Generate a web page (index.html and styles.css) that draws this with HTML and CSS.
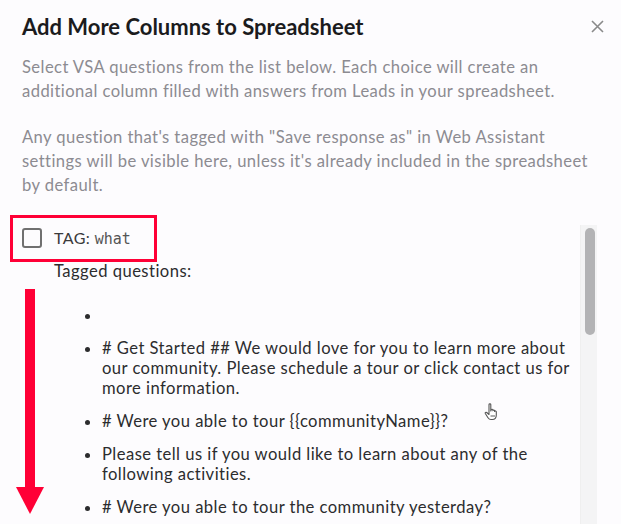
FILE: index.html
```html
<!DOCTYPE html>
<html lang="en">
<head>
    <meta charset="UTF-8">
    <meta name="viewport" content="width=device-width, initial-scale=1.0">
    <title>Add More Columns to Spreadsheet</title>
    <link rel="stylesheet" href="styles.css">
</head>
<body>
<div class="dialog">

    <div class="header">
        <h2 class="title">Add More Columns to Spreadsheet</h2>
        <span class="close">
            <svg width="13" height="13" viewBox="0 0 13 13"><path d="M1 1L12 12M12 1L1 12" stroke="#8a8a8a" stroke-width="1.6" fill="none"/></svg>
        </span>
    </div>

    <div class="intro">
        <p>Select VSA questions from the list below. Each choice will create an additional column filled with answers from Leads in your spreadsheet.</p>
        <p>Any question that's tagged with "Save response as" in Web Assistant settings will be visible here, unless it's already included in the spreadsheet by default.</p>
    </div>

    <div class="scroll-area">
        <div class="scroll-content">
            <label class="tag-row">
                <span class="checkbox"></span>
                <span>TAG: <code>what</code></span>
            </label>
            <div class="tagged">
                <div class="tagged-label">Tagged questions:</div>
                <ul class="questions">
                    <li>&nbsp;</li>
                    <li># Get Started ## We would love for you to learn more about our community. Please schedule a tour or click contact us for more information.</li>
                    <li># Were you able to tour {{communityName}}?</li>
                    <li>Please tell us if you would like to learn about any of the following activities.</li>
                    <li># Were you able to tour the community yesterday?</li>
                </ul>
            </div>
        </div>
        <div class="scroll-track">
            <div class="scroll-thumb"></div>
        </div>
    </div>

    <!-- annotations on top of the screenshot -->
    <div class="highlight-box"></div>
    <div class="arrow">
        <div class="arrow-line"></div>
        <div class="arrow-head"></div>
    </div>
    <svg class="cursor" width="18" height="20" viewBox="0 0 18 20">
        <path d="M5 2.5c0-1 1.8-1 1.8 0V9l.4-1.2c.4-.9 1.7-.6 1.7.3v.6c.3-.9 1.7-.8 1.7.2v.5c.4-.8 1.7-.6 1.7.4V13c0 2.5-1.6 4.5-4 4.5H7c-1.4 0-2.3-.7-3-1.8L1.3 11.5c-.5-.9.6-1.7 1.4-1L5 12.5z" fill="#fff" stroke="#555" stroke-width="1.1" stroke-linejoin="round"/>
        <path d="M6.5 14h4.5" stroke="#999" stroke-width="1.6"/>
    </svg>

</div>
</body>
</html>
```

FILE: styles.css
```css
body {
    margin: 0;
    background: #fdfcfe;
    font-family: Lato, "Open Sans", sans-serif;
    overflow: hidden;
}

.dialog {
    position: relative;
    height: 524px;
    padding: 12px 0 0 22px;
    box-sizing: border-box;
}

.header {
    display: flex;
    justify-content: space-between;
    align-items: center;
    padding-right: 17px;
}

.title {
    margin: 0;
    font-size: 22px;
    font-weight: 700;
    color: #1b1b1d;
    line-height: 30px;
}

.close {
    display: flex;
    margin-top: -2px;
}

.intro {
    padding-right: 24px;
}

.intro p {
    margin: 13px 0 22px;
    font-size: 16.6px;
    letter-spacing: 0.42px;
    line-height: 24px;
    color: #8c8b91;
}

.intro p + p {
    margin-top: 0;
    margin-bottom: 28px;
}

.scroll-area {
    display: flex;
    padding-right: 24px;
}

.scroll-content {
    flex: 1;
}

.tag-row {
    display: flex;
    align-items: center;
    gap: 12px;
    height: 24px;
    padding-top: 1px;
    font-size: 16px;
    letter-spacing: 0.4px;
    color: #3a3a3c;
}

.tag-row code {
    font-family: "DejaVu Sans Mono", monospace;
    font-size: 15px;
    letter-spacing: 0;
    color: #555;
}

.checkbox {
    width: 16px;
    height: 16px;
    border: 2px solid #707070;
    border-radius: 3px;
}

.tagged {
    padding-left: 32px;
    padding-top: 11px;
    font-size: 16.6px;
    letter-spacing: 0.45px;
    color: #2c2c2e;
}

.tagged-label {
    line-height: 20px;
}

.questions {
    margin: 24px 0 0;
    padding-left: 48px;
    line-height: 20px;
}

.questions li {
    margin-bottom: 13px;
}

.scroll-track {
    width: 17px;
    margin-left: 2px;
    height: 300px;
    background: #f4f4f5;
    border-left: 1px solid #efefef;
    box-sizing: border-box;
    padding: 3px 0 0 4px;
}

.scroll-thumb {
    width: 10px;
    height: 107px;
    border-radius: 5px;
    background: #b3b3b5;
}

.highlight-box {
    position: absolute;
    left: 10px;
    top: 215px;
    width: 147px;
    height: 47px;
    border: 3px solid #ff0036;
    box-sizing: border-box;
}

.arrow {
    position: absolute;
    left: 16px;
    top: 289px;
    width: 28px;
    display: flex;
    flex-direction: column;
    align-items: center;
}

.arrow-line {
    width: 10px;
    height: 198px;
    background: #ff0036;
}

.arrow-head {
    width: 0;
    height: 0;
    border-left: 14px solid transparent;
    border-right: 14px solid transparent;
    border-top: 27px solid #ff0036;
}

.cursor {
    position: absolute;
    left: 484px;
    top: 402px;
}
```
